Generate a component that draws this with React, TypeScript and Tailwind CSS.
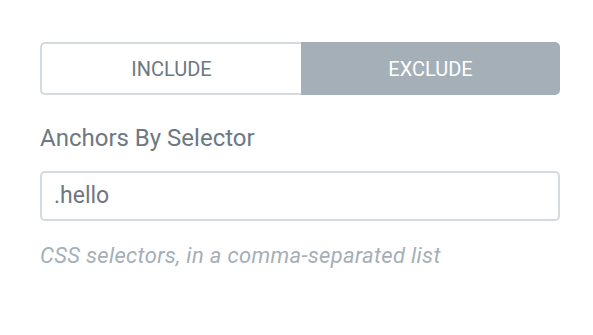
export default function App() {
  return (
    <div className="min-h-screen bg-white px-10 pt-[42px] font-['Roboto',sans-serif]">
      <div className="flex h-[53px] w-[520px]">
        <button className="flex flex-1 items-center justify-center rounded-l-[5px] border-2 border-r-0 border-[#d5dadf] bg-white text-[20px] uppercase text-[#6d7882]">
          Include
        </button>
        <button className="flex flex-1 items-center justify-center rounded-r-[5px] bg-[#a4afb7] text-[20px] uppercase text-white">
          Exclude
        </button>
      </div>
      <div className="mt-[31px] text-[24px] leading-[24px] text-[#6d7882]">Anchors By Selector</div>
      <div className="mt-[21px] flex h-[50px] w-[520px] items-center rounded-[5px] border-2 border-[#d5dadf] px-3 text-[23px] text-[#6d7882]">
        .hello
      </div>
      <div className="mt-[24px] text-[22px] leading-[22px] tracking-[0.33px] italic text-[#a4afb7]">
        CSS selectors, in a comma-separated list
      </div>
    </div>
  );
}
